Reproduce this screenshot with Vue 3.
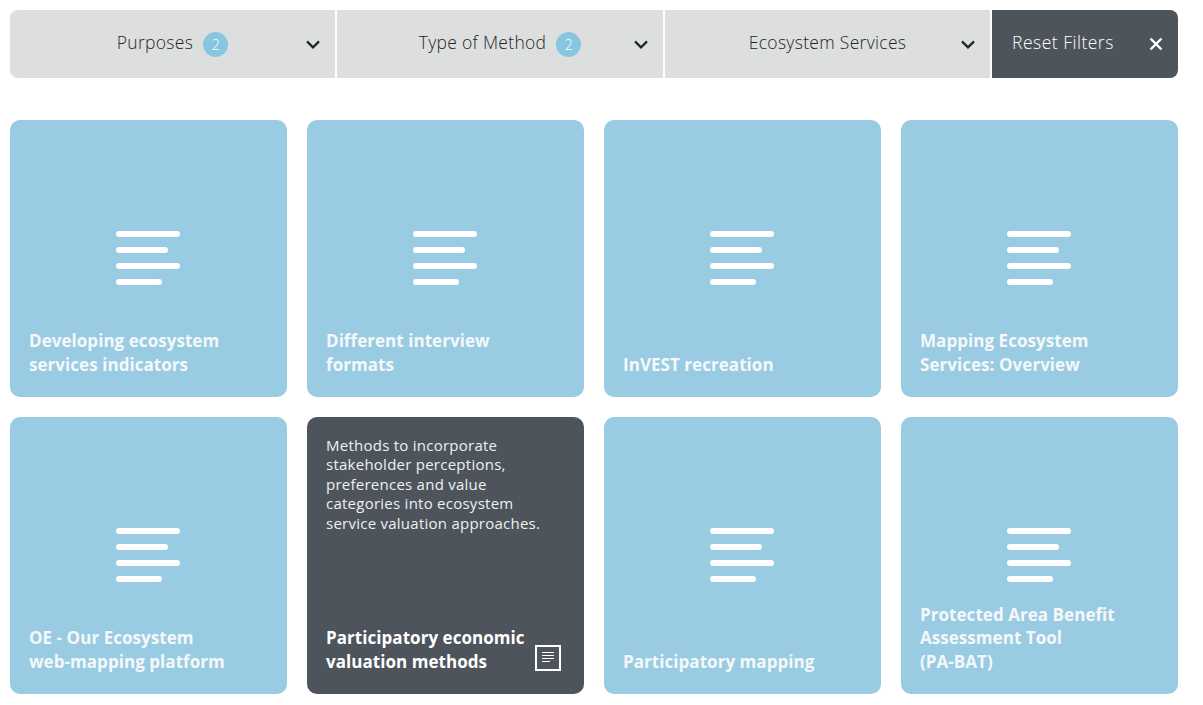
<script setup>
const filters = [
  { label: 'Purposes', count: 2 },
  { label: 'Type of Method', count: 2 },
  { label: 'Ecosystem Services', count: 0 }
]
const lines = [64, 52, 64, 46]
const cards = [
  { title: ['Developing ecosystem', 'services indicators'] },
  { title: ['Different interview', 'formats'] },
  { title: ['InVEST recreation'] },
  { title: ['Mapping Ecosystem', 'Services: Overview'] },
  { title: ['OE - Our Ecosystem', 'web-mapping platform'] },
  {
    title: ['Participatory economic', 'valuation methods'],
    active: true,
    text: ['Methods to incorporate', 'stakeholder perceptions,', 'preferences and value', 'categories into ecosystem', 'service valuation approaches.']
  },
  { title: ['Participatory mapping'] },
  { title: ['Protected Area Benefit', 'Assessment Tool', '(PA-BAT)'] }
]
</script>

<template>
  <div class="page">
    <div class="filters">
      <button v-for="f in filters" :key="f.label" class="filter">
        <span></span>
        <span class="name">
          <span class="label">{{ f.label }}</span>
          <span v-if="f.count" class="count">{{ f.count }}</span>
        </span>
        <svg class="chev" width="14" height="9" viewBox="0 0 14 9">
          <path d="M1 1.400 7 7.400l6-6" fill="none" stroke="#1f2328" stroke-width="2.200" />
        </svg>
      </button>
      <button class="reset">
        <span class="label">Reset Filters</span>
        <svg width="14" height="14" viewBox="0 0 14 14">
          <path d="M1.500 1.500l11 11M12.500 1.500l-11 11" fill="none" stroke="#fff" stroke-width="2.400" />
        </svg>
      </button>
    </div>
    <div class="grid">
      <div v-for="c in cards" :key="c.title[0]" class="card" :class="{ active: c.active }">
        <template v-if="c.active">
          <p class="desc"><span v-for="l in c.text" :key="l">{{ l }}</span></p>
          <svg class="doc" width="26" height="26" viewBox="0 0 26 26">
            <rect x="1" y="1" width="24" height="24" fill="none" stroke="#fff" stroke-width="2" />
            <path d="M7 7.500h12M7 10.500h12M7 13.500h12M7 16.500h8" stroke="#fff" stroke-width="1" />
          </svg>
        </template>
        <div v-else class="lines">
          <i v-for="(w, n) in lines" :key="n" :style="{ width: w + 'px' }"></i>
        </div>
        <h3 class="title"><span v-for="l in c.title" :key="l">{{ l }}</span></h3>
      </div>
    </div>
  </div>
</template>

<style>
html, body { background: #fff; margin: 0; overflow: hidden; }
</style>

<style scoped>
.page {
  width: 1168px;
  padding: 10px 25px 11px 10px;
  font-family: "Open Sans", "Liberation Sans", sans-serif;
}
.filters {
  display: grid;
  grid-template-columns: 325px 326px 325px 186px;
  column-gap: 2px;
  height: 68px;
  border-radius: 8px;
  overflow: hidden;
}
button {
  border: 0;
  margin: 0;
  padding: 0;
  font: inherit;
}
.filter {
  display: grid;
  grid-template-columns: 1fr auto 1fr;
  align-items: center;
  background: #dddfdf;
  color: #1f2328;
  font-size: 17.500px;
  font-weight: 300;
  padding: 0 15px;
}
.name {
  display: flex;
  align-items: center;
  gap: 10px;
}
.label {
  letter-spacing: 0.3px;
  position: relative;
  top: -2px;
}
.count {
  width: 25px;
  height: 25px;
  border-radius: 50%;
  background: #88c5e1;
  color: #fff;
  font-size: 14px;
  display: flex;
  align-items: center;
  justify-content: center;
}
.chev { justify-self: end; }
.reset {
  display: flex;
  align-items: center;
  justify-content: space-between;
  background: #4e545c;
  color: #fff;
  font-size: 17.500px;
  font-weight: 300;
  padding: 0 15px 0 20px;
}
.reset .label { letter-spacing: 0.5px; }
.grid {
  display: grid;
  grid-template-columns: repeat(4, 277px);
  grid-auto-rows: 277px;
  gap: 20px;
  margin-top: 42px;
}
.card {
  display: grid;
  background: #99cce2;
  border-radius: 10px;
  padding: 19px 19px 21px;
  box-sizing: border-box;
  color: #f4f8fa;
}
.card > * { grid-area: 1 / 1; }
.lines {
  place-self: center;
  display: flex;
  flex-direction: column;
  gap: 10px;
  width: 64px;
  margin-left: -1px;
}
.lines i {
  display: block;
  height: 6px;
  border-radius: 3px;
  background: #fff;
}
.title {
  align-self: end;
  margin: 0;
  font-size: 17px;
  line-height: 23.400px;
  font-weight: 700;
  letter-spacing: 0.05px;
}
.title span, .desc span { display: block; white-space: nowrap; }
.active { background: #4e545c; color: #fff; }
.desc {
  margin: -0.400px 0 0;
  align-self: start;
  font-size: 15px;
  line-height: 19.500px;
  letter-spacing: 0.25px;
  color: #eef0f1;
}
.doc {
  align-self: end;
  justify-self: end;
  margin-right: 4px;
  margin-bottom: 2px;
}
</style>
